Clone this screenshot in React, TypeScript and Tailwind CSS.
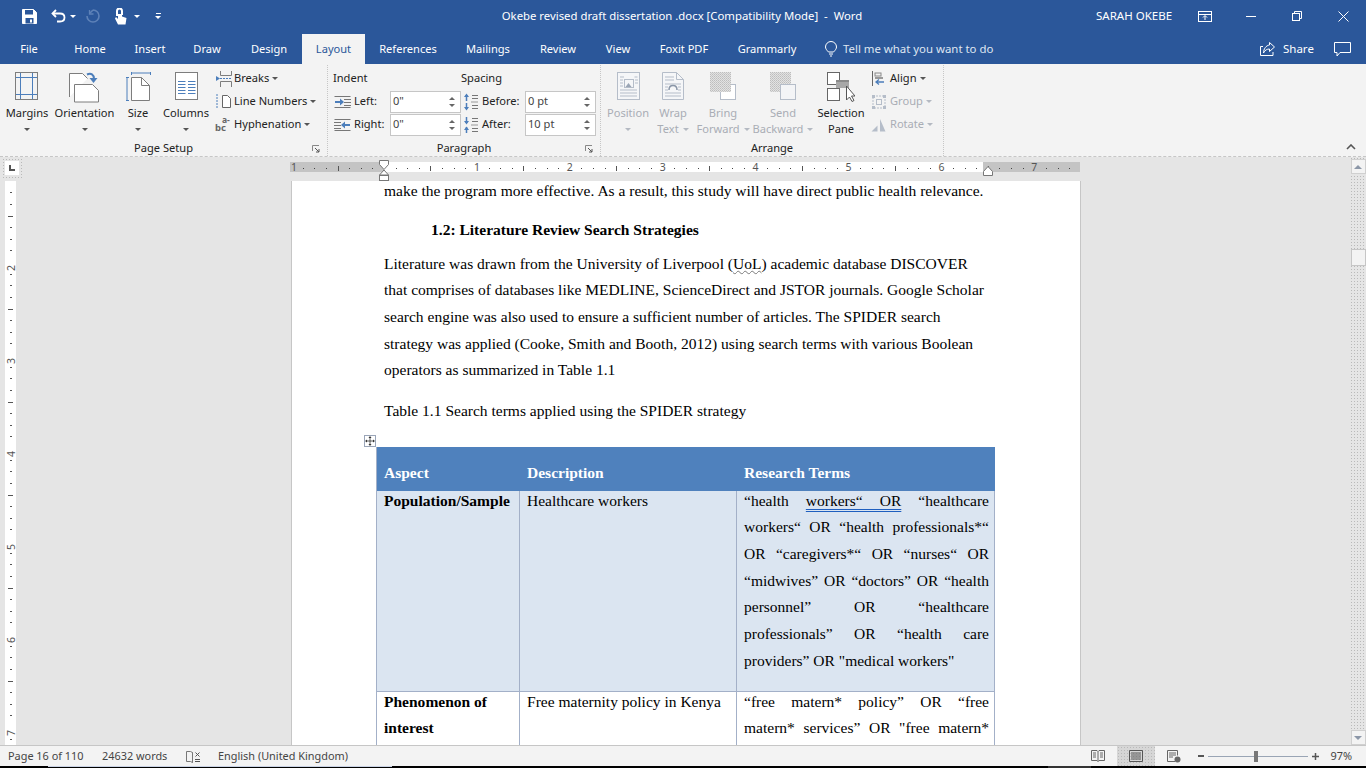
import type { ReactNode } from 'react'

const uiFont = "font-['Noto_Sans',sans-serif]"
const dots = 'bg-[radial-gradient(#b9b9b9_0.6px,transparent_0.7px)] bg-[length:3px_3px]'

function Ico({ w, h, children, className = '' }: { w: number; h: number; children: ReactNode; className?: string }) {
    return (
        <svg width={w} height={h} viewBox={`0 0 ${w} ${h}`} fill="none" className={`shrink-0 ${className}`}>
            {children}
        </svg>
    )
}

function Caret({ light = false }: { light?: boolean }) {
    return <span className={`inline-block h-0 w-0 border-x-[3px] border-t-[3px] border-x-transparent ${light ? 'border-t-[#b4b9c2]' : 'border-t-[#555]'}`} />
}

function Big({ w, icon, a, b, off = false, arrow = true }: { w: number; icon: ReactNode; a: string; b?: string; off?: boolean; arrow?: boolean }) {
    return (
        <div className={`flex shrink-0 flex-col items-center text-[11.1px] leading-[16px] ${off ? 'text-[#a9adb5]' : 'text-[#222]'}`} style={{ width: w }}>
            <div className="flex h-[38px] items-start justify-center pt-[5px]">{icon}</div>
            <div className="whitespace-nowrap">{a}</div>
            {b ? (
                <div className="flex items-center gap-[4px] whitespace-nowrap">
                    {b}
                    {arrow && <Caret light={off} />}
                </div>
            ) : (
                arrow && (
                    <div className="flex h-[16px] items-center">
                        <Caret light={off} />
                    </div>
                )
            )}
        </div>
    )
}

function Small({ icon, label, off = false }: { icon: ReactNode; label: string; off?: boolean }) {
    return (
        <div className={`flex h-[23px] items-center whitespace-nowrap text-[11.1px] ${off ? 'text-[#a9adb5]' : 'text-[#222]'}`}>
            <div className="flex w-[19px] justify-start">{icon}</div>
            <span>{label}</span>
            <span className="ml-[3px] flex items-center">
                <Caret light={off} />
            </span>
        </div>
    )
}

function Launcher() {
    return (
        <Ico w={8} h={8}>
            <path d="M.5 6V.5H7" stroke="#888" />
            <path d="M3 3l4 4M7 4v3H4" stroke="#555" />
        </Ico>
    )
}

function Spin({ value }: { value: string }) {
    return (
        <div className="flex h-[22px] w-[71px] items-center justify-between border border-[#c6c6c6] bg-white pl-[2px] pr-[5px] text-[11.1px] text-[#444]">
            <span>{value}</span>
            <span className="flex flex-col gap-[4px]">
                <span className="h-0 w-0 border-x-[3px] border-b-[3px] border-x-transparent border-b-[#666]" />
                <span className="h-0 w-0 border-x-[3px] border-t-[3px] border-x-transparent border-t-[#666]" />
            </span>
        </div>
    )
}

function Group({ w, label, launcher = false, children }: { w: number; label: string; launcher?: boolean; children: ReactNode }) {
    return (
        <div className="flex h-full shrink-0 flex-col border-r border-dotted border-[#c6c6c6]" style={{ width: w }}>
            <div className="flex h-[76px] pt-[2px]">{children}</div>
            <div className="relative h-[16px] text-center text-[11.1px] leading-[16px] text-[#222]">
                {label}
                {launcher && (
                    <span className="absolute right-[7px] top-[5px] flex">
                        <Launcher />
                    </span>
                )}
            </div>
        </div>
    )
}

const blue = '#4c7ebb'
const gr = '#7d7d7d'
const off = '#b5bdc9'

const MarginsIcon = (
    <Ico w={24} h={28}>
        <rect x=".5" y=".5" width="22" height="27" stroke={gr} />
        <path d="M5.500 1v26M17.500 1v26M1 5.500h21M1 22.500h21" stroke={blue} />
    </Ico>
)
const OrientationIcon = (
    <Ico w={31} h={31}>
        <path d="M.5 25V1.500h13l5 5" stroke={gr} fill="#fff" />
        <path d="M5.500 12.500h18l6 6v11.500h-24z" stroke={gr} fill="#fff" />
        <path d="M18 2.500c4-2 7 0 7 4.500" stroke={blue} strokeWidth="2" />
        <path d="M20.500 6h8l-4 5z" fill={blue} />
    </Ico>
)
const SizeIcon = (
    <Ico w={25} h={30}>
        <path d="M5.500 1h19M5.500 0v3M24.500 0v3M1 5v24M0 5.500h3M0 28.500h3" stroke={blue} />
        <path d="M5.500 5.500h10l8 8v15h-18z" stroke={gr} fill="#fff" />
        <path d="M15.500 5.500v8h8" stroke={gr} />
    </Ico>
)
const ColumnsIcon = (
    <Ico w={23} h={28}>
        <rect x=".5" y=".5" width="22" height="27" stroke={gr} fill="#fff" />
        <path d="M3 9.500h7.500M13 9.500h7.500M3 12.500h7.500M13 12.500h7.500M3 15.500h7.500M13 15.500h7.500M3 18.500h7.500M13 18.500h7.500M3 21.500h7.500M13 21.500h7.500" stroke={blue} />
    </Ico>
)
const BreaksIcon = (
    <Ico w={17} h={16}>
        <path d="M5.500 0v4.500h11V0M5.500 16v-5.500h11V16" stroke={gr} />
        <path d="M1 5l4 2.500-4 2.500z" fill={blue} />
        <path d="M5 7.500h12" stroke={blue} strokeDasharray="2 1" />
    </Ico>
)
const LineNumbersIcon = (
    <Ico w={17} h={15}>
        <path d="M1 1h3M1 4h3M1 7h3M1 10h3M1 13h3" stroke={blue} strokeDasharray="2 1" />
        <path d="M7.500 1.500h5l3 3v9h-8z" stroke="#666" fill="#fff" />
    </Ico>
)
const HyphenIcon = (
    <Ico w={18} h={21}>
        <text x="0" y="17" fontSize="9.500" fontWeight="700" fill="#666" fontFamily="Noto Sans, sans-serif">
            bc
        </text>
        <text x="7" y="9" fontSize="8.500" fontWeight="700" fill="#666" fontFamily="Noto Sans, sans-serif">
            a-
        </text>
    </Ico>
)
const PositionIcon = (
    <Ico w={23} h={28}>
        <rect x=".5" y=".5" width="22" height="27" stroke={off} fill="#f5f6f8" />
        <rect x="7.500" y="7.500" width="9" height="8" stroke={off} />
        <path d="M8.500 15l3-4 3 4z" fill="#9aa5b5" />
        <path d="M3 5h4M3 8h3M3 11h3M3 14h3M3 18h17M3 21h17M3 24h17M17.500 5h3M18 8h3M18 11h3" stroke={off} />
    </Ico>
)
const WrapIcon = (
    <Ico w={22} h={28}>
        <path d="M.5.500h14l7 7v20H.5z" stroke={off} fill="#f5f6f8" />
        <path d="M14.500.500v7h7M3 5h9M3 8h9M3 12h16M3 15h3M16 15h3M3 18h3M16 18h3M3 21h16M3 24h16" stroke={off} />
        <path d="M7 18c0-6 8-6 8 0" stroke="#8a96a8" strokeWidth="1.500" />
    </Ico>
)
const Stipple = () => (
    <pattern id="stip" width="2" height="2" patternUnits="userSpaceOnUse">
        <rect width="2" height="2" fill="#e2e2e2" />
        <rect width="1" height="1" fill="#bdbdbd" />
        <rect x="1" y="1" width="1" height="1" fill="#c8c8c8" />
    </pattern>
)
const BringIcon = (
    <Ico w={26} h={28}>
        <defs>
            <Stipple />
        </defs>
        <rect x="10.500" y="12.500" width="15" height="15" stroke={off} fill="#fff" />
        <rect x="0" y="0" width="21" height="20" fill="url(#stip)" />
    </Ico>
)
const SendIcon = (
    <Ico w={26} h={28}>
        <rect x="0" y="0" width="21" height="20" fill="url(#stip)" />
        <rect x="10.500" y="12.500" width="15" height="15" stroke={off} fill="#f3f4f6" />
    </Ico>
)
const SelectionIcon = (
    <Ico w={28} h={30}>
        <rect x=".5" y=".5" width="12" height="12" stroke="#666" fill="#fff" />
        <rect x=".5" y="16.500" width="12" height="12" stroke="#666" fill="#fff" />
        <rect x="9" y="8" width="13" height="8" fill="#a8a8a8" />
        <rect x="9" y="8" width="13" height="2" fill="#8a8a8a" />
        <path d="M19.500 14v14l3-3 2.500 4.500 2-1-2.500-4.500h3.500z" stroke="#555" fill="#fff" />
    </Ico>
)

function ArrowLines({ flip = false }: { flip?: boolean }) {
    return (
        <Ico w={17} h={14}>
            <g transform={flip ? 'matrix(-1 0 0 1 17 0)' : undefined}>
                <path d="M.5 1.500h16M10 4.500h7M10 7.500h7M10 10.500h7M.5 12.500h16" stroke="#777" />
                <path d="M1 7h7" stroke={blue} strokeWidth="2" />
                <path d="M6 3.500l4 3.500-4 3.500z" fill={blue} />
            </g>
        </Ico>
    )
}

function SpacingIcon({ down = false }: { down?: boolean }) {
    return (
        <Ico w={16} h={18}>
            <path d={down ? 'M3.500 1v6M3.500 11v6' : 'M3.500 2v6M3.500 10v6'} stroke={blue} strokeWidth="1.500" />
            <path d={down ? 'M1 5h5L3.500 8.500zM1 14h5L3.500 10.500z' : 'M1 4h5L3.500.5zM1 14h5l-2.500 3.500z'} fill={blue} />
            <path d="M9 2.500h6M9 5.500h6M9 12.500h6M9 15.500h6" stroke="#777" />
            <path d="M8 9h7" stroke="#999" />
        </Ico>
    )
}

function HRuler() {
    const unit = 92.9
    const ticks: ReactNode[] = []
    for (let i = -1; i < 8; i++) {
        for (let k = 1; k < 8; k++) {
            const x = 94 + i * unit + (k * unit) / 8
            if (x < 3 || x > 788) continue
            ticks.push(
                k === 4 ? (
                    <path key={`${i}-${k}`} d={`M${Math.round(x) + 0.5} 9v5`} stroke="#555" />
                ) : (
                    <rect key={`${i}-${k}`} x={Math.round(x)} y={11} width={1} height={1} fill="#444" />
                ),
            )
        }
    }
    return (
        <svg width="791" height="24" viewBox="0 0 791 24" className="block">
            <rect x="0" y="5" width="94" height="10" fill="#c4c4c4" />
            <rect x="94" y="5" width="599" height="10" fill="#fff" />
            <rect x="693" y="5" width="97" height="10" fill="#c4c4c4" />
            {ticks}
            {[1, 2, 3, 4, 5, 6, 7].map((n) => (
                <text key={n} x={94 + n * unit} y="14" textAnchor="middle" fontSize="10.500" fill="#555" fontFamily="Noto Sans, sans-serif">
                    {n}
                </text>
            ))}
            <text x="1" y="14" fontSize="10.500" fill="#555" fontFamily="Noto Sans, sans-serif">
                1
            </text>
            <path d="M89.500 3.500h9v4l-4.500 5-4.500-5z M89.500 18l4.500-5 4.500 5z" fill="#fff" stroke="#777" />
            <rect x="89.500" y="18.500" width="9" height="5" fill="#fff" stroke="#777" />
            <path d="M693.500 18.500v-4l4.500-5 4.500 5v4z" fill="#fff" stroke="#777" />
        </svg>
    )
}

function VRuler() {
    const unit = 93
    const items: ReactNode[] = []
    for (let i = 0; i < 7; i++) {
        for (let k = 1; k < 8; k++) {
            const y = -12 + i * unit + (k * unit) / 8
            if (y < 1) continue
            items.push(k === 4 ? <path key={`${i}${k}`} d={`M3 ${Math.round(y) + 0.5}h5`} stroke="#555" /> : <rect key={`${i}${k}`} x="5" y={Math.round(y)} width="2" height="1" fill="#555" />)
        }
    }
    return (
        <svg width="11" height="564" viewBox="0 0 11 564" className="block bg-white">
            {items}
            {[2, 3, 4, 5, 6, 7].map((n) => (
                <text key={n} x="5.500" y={87 + (n - 2) * unit} transform={`rotate(-90 5.500 ${87 + (n - 2) * unit})`} textAnchor="middle" dominantBaseline="central" fontSize="10.500" fill="#555" fontFamily="Noto Sans, sans-serif">
                    {n}
                </text>
            ))}
        </svg>
    )
}

function L({ children, j = false, className = '' }: { children: ReactNode; j?: boolean; className?: string }) {
    return <div className={`${j ? 'whitespace-normal [text-align-last:justify]' : 'whitespace-nowrap'} ${className}`}>{children}</div>
}

const tabs: [string, number][] = [
    ['File', 58],
    ['Home', 64],
    ['Insert', 56],
    ['Draw', 58],
    ['Design', 66],
    ['Layout', 63],
    ['References', 86],
    ['Mailings', 74],
    ['Review', 66],
    ['View', 54],
    ['Foxit PDF', 78],
    ['Grammarly', 88],
]

const rule = 'border-[#a3b0c8]'

export default function App() {
    return (
        <div className={`flex h-[768px] w-[1366px] flex-col overflow-hidden bg-black ${uiFont}`}>
            {/* title bar */}
            <div className="flex h-[32px] shrink-0 items-center bg-[#2b579a] text-[11.5px] text-white">
                <div className="flex w-[470px] items-center pl-[22px]">
                    <Ico w={15} h={15}>
                        <path d="M.5.500h11l3 3v11H.5z" stroke="#fff" fill="#fff" />
                        <rect x="3" y="1" width="8" height="4.500" fill="#2b579a" />
                        <rect x="3.500" y="9" width="8" height="5.500" fill="#2b579a" />
                        <rect x="8" y="10.500" width="2" height="3" fill="#fff" />
                    </Ico>
                    <Ico w={15} h={14} className="ml-[14px]">
                        <path d="M5 1L1.500 4.500 5 8" stroke="#fff" strokeWidth="1.800" />
                        <path d="M2 4.500h7c6 0 6 8 0 8H6" stroke="#fff" strokeWidth="1.800" />
                    </Ico>
                    <span className="ml-[4px] h-0 w-0 border-x-[3px] border-t-[3px] border-x-transparent border-t-white" />
                    <Ico w={15} h={14} className="ml-[9px]">
                        <path d="M8 1a6 6 0 1 1-6 6M8 1L5 4" stroke="#5e82b8" strokeWidth="1.600" />
                        <path d="M4.500 1v4h4" stroke="#5e82b8" strokeWidth="1.300" />
                    </Ico>
                    <Ico w={13} h={17} className="ml-[14px]">
                        <path d="M3 8V3a2.500 2.500 0 0 1 5 0v4" stroke="#fff" strokeWidth="2" />
                        <path d="M4 6v5L2 9 1 10.500 4 16.500h7.500L12.500 10 8 8.500V6z" fill="#fff" />
                    </Ico>
                    <span className="ml-[7px] h-0 w-0 border-x-[3px] border-t-[3px] border-x-transparent border-t-white" />
                    <span className="ml-[15px] flex flex-col items-center gap-[2px]">
                        <span className="h-px w-[5px] bg-white" />
                        <span className="h-0 w-0 border-x-[3px] border-t-[3px] border-x-transparent border-t-white" />
                    </span>
                </div>
                <div className="w-[424px] whitespace-pre text-center text-[11.35px]">Okebe revised draft dissertation .docx [Compatibility Mode]  -  Word</div>
                <div className="ml-[202px] w-[76px] whitespace-nowrap">SARAH OKEBE</div>
                <Ico w={14} h={11} className="ml-[26px]">
                    <rect x=".5" y=".5" width="13" height="10" stroke="#fff" />
                    <path d="M1 3.500h12M7 9V5M5 6.500l2-2 2 2" stroke="#fff" />
                </Ico>
                <Ico w={10} h={1} className="ml-[34px]">
                    <path d="M0 .5h10" stroke="#fff" />
                </Ico>
                <Ico w={10} h={10} className="ml-[36px]">
                    <path d="M2.500 2V.5h7v7H8" stroke="#fff" />
                    <rect x=".5" y="2.500" width="7" height="7" stroke="#fff" />
                </Ico>
                <Ico w={11} h={11} className="ml-[36px]">
                    <path d="M.5.500l10 10M10.500.500l-10 10" stroke="#fff" />
                </Ico>
            </div>

            {/* tabs */}
            <div className="flex h-[32px] shrink-0 items-end bg-[#2b579a] text-[11.1px] text-white">
                {tabs.map(([t, w]) => (
                    <div
                        key={t}
                        className={`flex h-[30px] items-center justify-center whitespace-nowrap ${t === 'Layout' ? 'bg-[#f3f3f3] text-[#2b579a]' : ''}`}
                        style={{ width: w }}
                    >
                        {t}
                    </div>
                ))}
                <div className="flex h-[30px] items-center pl-[14px] text-[#dfe6f1]">
                    <Ico w={12} h={16}>
                        <path d="M3.500 11C1.500 9 .5 7.500.5 6a5.500 5.500 0 0 1 11 0c0 1.500-1 3-3 5z M4 13h4M5 15h2" stroke="#fff" />
                    </Ico>
                    <span className="ml-[6px] whitespace-nowrap text-[11.4px]">Tell me what you want to do</span>
                </div>
                <div className="flex-1" />
                <div className="flex h-[30px] items-center text-[11.5px]">
                    <Ico w={15} h={14}>
                        <path d="M3 4.500H.5v9H13V10" stroke="#fff" />
                        <path d="M9.500.500L14.500 5l-5 4.500V7C7 7 5 8 3.500 11 3.500 7 6 3.500 9.500 3z" stroke="#fff" />
                    </Ico>
                    <span className="ml-[8px] w-[30px]">Share</span>
                    <Ico w={17} h={15} className="ml-[21px] mr-[15px]">
                        <path d="M.5.500h16v10H6L3 14v-3.500H.5z" stroke="#fff" />
                    </Ico>
                </div>
            </div>

            {/* ribbon */}
            <div className="relative flex h-[93px] shrink-0 border-b border-dashed border-[#c6c6c6] bg-[#f3f3f3] pt-[1px]">
                <Group w={328} label="Page Setup" launcher>
                    <Big w={54} icon={MarginsIcon} a="Margins" />
                    <Big w={61} icon={OrientationIcon} a="Orientation" />
                    <Big w={46} icon={SizeIcon} a="Size" />
                    <Big w={50} icon={ColumnsIcon} a="Columns" />
                    <div className="flex flex-col pl-[4px]">
                        <Small icon={BreaksIcon} label="Breaks" />
                        <Small icon={LineNumbersIcon} label="Line Numbers" />
                        <Small icon={HyphenIcon} label="Hyphenation" />
                    </div>
                </Group>
                <Group w={273} label="Paragraph" launcher>
                    <div className="flex w-[133px] flex-col pl-[6px] text-[11.1px] text-[#222]">
                        <div className="-ml-px flex h-[23px] items-center">Indent</div>
                        <div className="flex h-[23px] items-center gap-[3px]">
                            <ArrowLines />
                            <span className="w-[33px]">Left:</span>
                            <Spin value={'0"'} />
                        </div>
                        <div className="flex h-[23px] items-center gap-[3px]">
                            <ArrowLines flip />
                            <span className="w-[33px]">Right:</span>
                            <Spin value={'0"'} />
                        </div>
                    </div>
                    <div className="flex flex-col text-[11.1px] text-[#222]">
                        <div className="flex h-[23px] items-center">Spacing</div>
                        <div className="flex h-[23px] items-center pl-[2px]">
                            <SpacingIcon />
                            <span className="ml-[3px] w-[43px]">Before:</span>
                            <Spin value="0 pt" />
                        </div>
                        <div className="flex h-[23px] items-center pl-[2px]">
                            <SpacingIcon down />
                            <span className="ml-[3px] w-[43px]">After:</span>
                            <Spin value="10 pt" />
                        </div>
                    </div>
                </Group>
                <Group w={343} label="Arrange">
                    <div className="w-[3px]" />
                    <Big w={48} off icon={PositionIcon} a="Position" />
                    <Big w={42} off icon={WrapIcon} a="Wrap" b="Text" />
                    <Big w={58} off icon={BringIcon} a="Bring" b="Forward" />
                    <Big w={62} off icon={SendIcon} a="Send" b="Backward" />
                    <Big w={54} icon={SelectionIcon} a="Selection" b="Pane" arrow={false} />
                    <div className="flex flex-col pl-[3px]">
                        <Small
                            icon={
                                <Ico w={15} h={15}>
                                    <path d="M1.500 0v15" stroke="#666" />
                                    <rect x="4" y="2" width="6" height="3" stroke="#888" />
                                    <path d="M4 6h8v2H4z" fill="#999" />
                                    <path d="M13 11H5M8 8.500L5 11l3 2.500" stroke={blue} strokeWidth="1.300" />
                                </Ico>
                            }
                            label="Align"
                        />
                        <Small
                            off
                            icon={
                                <Ico w={16} h={16}>
                                    <path d="M2 2h12v12H2z" stroke={off} strokeDasharray="2 1" />
                                    <rect x="1" y="1" width="3" height="3" fill={off} />
                                    <rect x="12" y="1" width="3" height="3" fill={off} />
                                    <rect x="1" y="12" width="3" height="3" fill={off} />
                                    <rect x="12" y="12" width="3" height="3" fill={off} />
                                    <rect x="5.500" y="5.500" width="5" height="5" stroke={off} />
                                </Ico>
                            }
                            label="Group"
                        />
                        <Small
                            off
                            icon={
                                <Ico w={16} h={14}>
                                    <path d="M.5 13.500l6-6v6zM9 1l5.500 12.500H9z" fill={off} />
                                </Ico>
                            }
                            label="Rotate"
                        />
                    </div>
                </Group>
                <div className="flex flex-1 items-end justify-end pb-[6px] pr-[10px]">
                    <Ico w={10} h={6}>
                        <path d="M1 5l4-4 4 4" stroke="#555" strokeWidth="1.600" />
                    </Ico>
                </div>
            </div>

            {/* document area */}
            <div className="flex min-h-0 flex-1 bg-[#e5e5e5]">
                <div className="flex w-[290px] shrink-0 flex-col">
                    <div className={`ml-[2px] mt-[1px] flex h-[20px] w-[20px] items-center justify-center ${dots}`}>
                        <div className="flex h-[14px] w-[14px] items-center justify-center bg-white">
                            <span className="h-[6px] w-[6px] border-b-2 border-l-2 border-[#555]" />
                        </div>
                    </div>
                    <div className="ml-[5px] mt-[3px]">
                        <VRuler />
                    </div>
                </div>
                <div className="flex w-[791px] shrink-0 flex-col">
                    <HRuler />
                    <div className="relative ml-px h-[564px] w-[790px] overflow-hidden border-x border-[#c6c6c6] bg-white pl-[92px] font-['Liberation_Serif',serif] text-[15.52px] leading-[26.7px] text-black">
                        <L className="-mt-[3.4px]">make the program more effective. As a result, this study will have direct public health relevance.</L>
                        <L className="ml-[47px] mt-[12.3px] font-bold">1.2: Literature Review Search Strategies</L>
                        <div className="mt-[7.3px]">
                            <L>
                                Literature was drawn from the University of Liverpool (<span className="underline decoration-[#7a7a7a] decoration-wavy decoration-1">UoL</span>) academic database DISCOVER
                            </L>
                            <L>that comprises of databases like MEDLINE, ScienceDirect and JSTOR journals. Google Scholar</L>
                            <L>search engine was also used to ensure a sufficient number of articles. The SPIDER search</L>
                            <L>strategy was applied (Cooke, Smith and Booth, 2012) using search terms with various Boolean</L>
                            <L>operators as summarized in Table 1.1</L>
                        </div>
                        <L className="mt-[13.4px]">Table 1.1 Search terms applied using the SPIDER strategy</L>

                        <div className="absolute left-[72px] top-[254px] flex h-[12px] w-[12px] items-center justify-center border border-[#9aa5b8] bg-white">
                            <Ico w={10} h={10}>
                                <path d="M5 1v8M1 5h8" stroke="#333" strokeWidth=".8" />
                                <path d="M5 0L3.500 2h3zM5 10L3.500 8h3zM0 5l2-1.500v3zM10 5L8 3.500v3z" fill="#333" />
                            </Ico>
                        </div>

                        <div className={`-ml-[8px] mt-[22.7px] grid w-[619px] grid-cols-[143px_217px_258px] border-l ${rule}`}>
                            <div className="col-span-3 grid h-[44px] grid-cols-[143px_217px_258px] bg-[#4f81bd] font-bold text-white">
                                <div className="pl-[7px] pt-[13.5px]">Aspect</div>
                                <div className="pl-[7px] pt-[13.5px]">Description</div>
                                <div className="pl-[7px] pt-[13.5px]">Research Terms</div>
                            </div>
                            <div className={`h-[201px] border-b border-r ${rule} bg-[#dbe5f1] pl-[7px] font-bold`}>
                                <div className="-mt-[3.4px]">Population/Sample</div>
                            </div>
                            <div className={`h-[201px] border-b border-r ${rule} bg-[#dbe5f1] pl-[7px]`}>
                                <div className="-mt-[3.4px]">Healthcare workers</div>
                            </div>
                            <div className={`h-[201px] border-b border-r ${rule} bg-[#dbe5f1] pl-[7px] pr-[5px]`}>
                                <div className="-mt-[3.4px]">
                                    <L j>
                                        “health{' '}
                                        <span className="underline decoration-[#1f5fbf] decoration-double decoration-1 underline-offset-[3px]">workers“ OR</span> “healthcare
                                    </L>
                                    <L j>workers“ OR “health professionals*“</L>
                                    <L j>OR “caregivers*“ OR “nurses“ OR</L>
                                    <L j>“midwives” OR “doctors” OR “health</L>
                                    <L j>personnel” OR “healthcare</L>
                                    <L j>professionals” OR “health care</L>
                                    <L>providers” OR "medical workers"</L>
                                </div>
                            </div>
                            <div className={`h-[60px] border-r ${rule} pl-[7px] font-bold`}>
                                <div className="-mt-[3.4px]">
                                    <L>Phenomenon of</L>
                                    <L>interest</L>
                                </div>
                            </div>
                            <div className={`h-[60px] border-r ${rule} pl-[7px]`}>
                                <div className="-mt-[3.4px]">Free maternity policy in Kenya</div>
                            </div>
                            <div className={`h-[60px] border-r ${rule} pl-[7px] pr-[5px]`}>
                                <div className="-mt-[3.4px]">
                                    <L j>“free matern* policy” OR “free</L>
                                    <L j>matern* services” OR "free matern*</L>
                                </div>
                            </div>
                        </div>
                    </div>
                </div>
                <div className="flex-1" />
                <div className={`flex w-[16px] shrink-0 flex-col items-center ${dots}`}>
                    <div className="mt-[2px] flex h-[15px] w-[15px] items-center justify-center border border-[#d0d0d0] bg-[#f3f3f3]">
                        <span className="h-0 w-0 border-x-[4px] border-b-[4px] border-x-transparent border-b-[#8c97a8]" />
                    </div>
                    <div className="mt-[75px] h-[17px] w-[15px] border border-[#c6c6c6] bg-[#f3f3f3]" />
                    <div className="flex-1" />
                    <div className="flex h-[15px] w-[15px] items-center justify-center border border-[#d0d0d0] bg-[#f3f3f3]">
                        <span className="h-0 w-0 border-x-[4px] border-t-[4px] border-x-transparent border-t-[#8c97a8]" />
                    </div>
                </div>
            </div>

            {/* status bar */}
            <div className="flex h-[21px] shrink-0 items-center border-t border-[#c6c6c6] bg-[#f3f3f3] text-[10.9px] text-[#444]">
                <span className="ml-[8px] w-[94px] whitespace-nowrap">Page 16 of 110</span>
                <span className="w-[84px] whitespace-nowrap">24632 words</span>
                <Ico w={15} h={13}>
                    <path d="M.5 1.500h4l2 1v10l-2-1h-4zM6.500 2.500v10" stroke="#777" />
                    <path d="M9.500 2.500l4 4M13.500 2.500l-4 4M9 9.500h5M9 11.500h5" stroke="#555" />
                </Ico>
                <span className="ml-[17px] whitespace-nowrap">English (United Kingdom)</span>
                <div className="flex-1" />
                <Ico w={14} h={12}>
                    <path d="M.5.500h5.500l1 1 1-1h5.500v10H8l-1 1-1-1H.5zM7 1.500v10M2 3h3M2 5h3M2 7h3M9 3h3M9 5h3M9 7h3" stroke="#666" />
                </Ico>
                <div className={`ml-[12px] flex h-full w-[38px] items-center justify-center bg-[#d6d6d6] ${dots}`}>
                    <Ico w={14} h={12}>
                        <path d="M.5.500h13v11H.5zM2 3h10M2 5h10M2 7h10M2 9h10" stroke="#555" />
                    </Ico>
                </div>
                <Ico w={14} h={13} className="ml-[12px]">
                    <path d="M8 11.500H.5V.5h10v5M2 3h7M2 5h7M2 7h4" stroke="#666" />
                    <circle cx="10.500" cy="9.500" r="3" fill="#666" />
                </Ico>
                <span className="ml-[17px] h-[2px] w-[6px] bg-[#555]" />
                <div className="ml-[4px] flex h-[11px] w-[100px] items-center">
                    <div className="h-px w-[46px] bg-[#9aa5b5]" />
                    <div className="h-[11px] w-[4px] bg-[#777]" />
                    <div className="h-px w-[50px] bg-[#9aa5b5]" />
                </div>
                <Ico w={7} h={7} className="ml-[4px]">
                    <path d="M3.500 0v7M0 3.500h7" stroke="#555" strokeWidth="1.500" />
                </Ico>
                <span className="ml-[11px] mr-[14px] whitespace-nowrap">97%</span>
            </div>
            <div className="flex h-[2px] shrink-0 bg-black">
                <div className="ml-[48px] h-px w-[344px] bg-[#c9d2e4]" />
                <div className="ml-[656px] h-[2px] w-[43px] bg-[#333]" />
            </div>
        </div>
    )
}
